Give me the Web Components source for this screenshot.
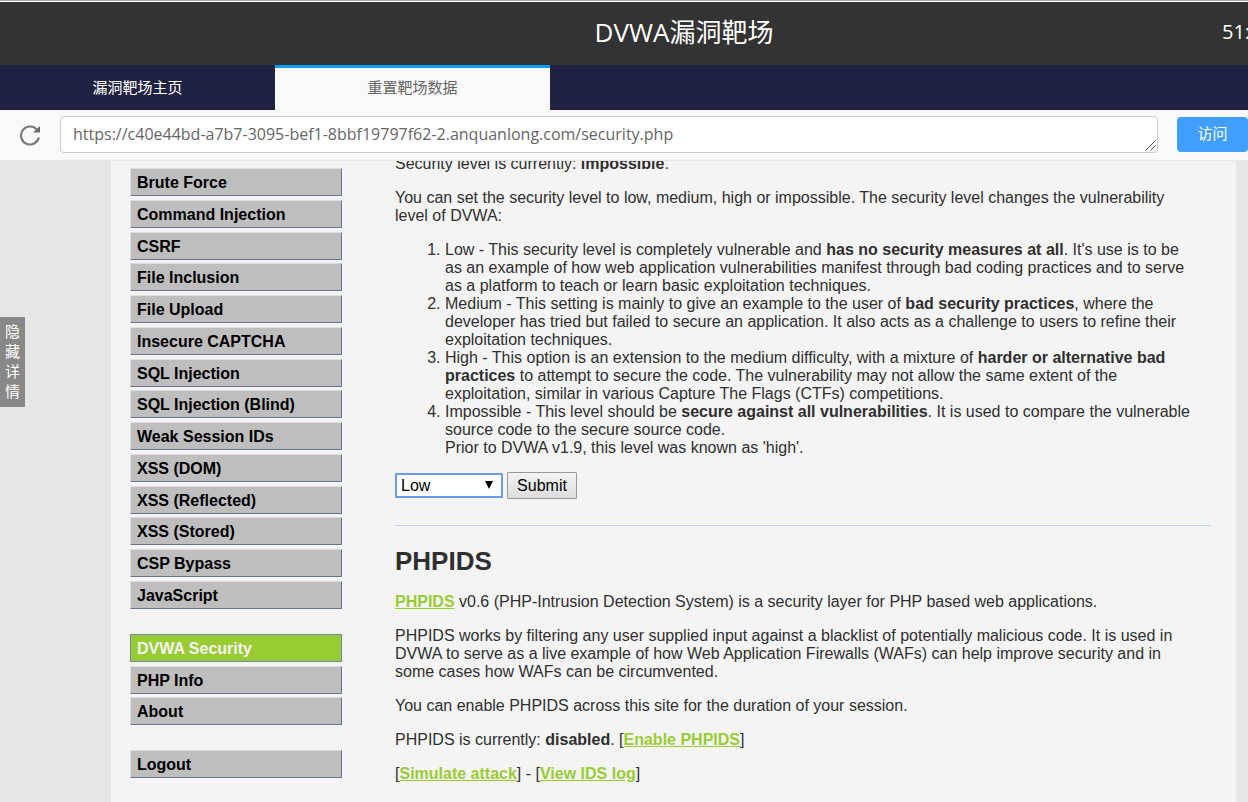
<!DOCTYPE html>
<html lang="zh-CN">
<head>
<meta charset="utf-8">
<meta name="viewport" content="width=device-width, initial-scale=1">
<title>DVWA漏洞靶场</title>
<style>
html, body { margin: 0; height: 100%; overflow: hidden; }
body { font-family: "Open Sans", "Noto Sans CJK SC", sans-serif; background: #e6e6e6; }
</style>
</head>
<body>
<lab-app></lab-app>
<script>
const define = (name, markup, setup) => {
  const template = document.createElement('template');
  template.innerHTML = markup;
  customElements.define(name, class extends HTMLElement {
    constructor() {
      super();
      this.attachShadow({ mode: 'open' }).append(template.content.cloneNode(true));
    }
    connectedCallback() { if (setup) setup(this, this.shadowRoot); }
  });
};

define('lab-header', `
<style>
:host { box-sizing: border-box; display: grid; grid-template-columns: 146px 1fr 26px; align-items: center; height: 64px; flex: none;
  padding-bottom: 4px; background: #333; color: #fff; border-top: 1px solid #fff; }
h1 { grid-column: 2; margin: 0; font-size: 26px; line-height: 36px; font-weight: 400; text-align: center; }
time { font-size: 20px; line-height: 28px; white-space: nowrap; overflow: hidden; }
</style>
<h1><slot></slot></h1><time><slot name="time"></slot></time>`);

define('lab-tabs', `
<style>
:host { display: flex; flex: none; background: #1f2240; height: 45px; }
::slotted(a) { box-sizing: border-box; width: 275px; border-top: 3px solid transparent; color: #fff;
  font-size: 15px; line-height: 38px; text-align: center; text-decoration: none; }
::slotted(a[aria-current]) { background: #f9f9f9; border-top-color: #0a9ff5; color: #666; }
</style>
<slot></slot>`);

define('lab-address', `
<style>
:host { box-sizing: border-box; display: flex; align-items: center; flex: none; height: 51px; padding-bottom: 1px; background: #f9f9f9; border-bottom: 1px solid #e8e8e8; }
button { font: inherit; border: 0; padding: 0; cursor: pointer; }
.reload { display: flex; margin: 0 19px; background: none; }
.field { position: relative; display: flex; flex: 1; min-width: 0; }
textarea { box-sizing: border-box; width: 100%; height: 37px; padding: 6px 12px; border: 1px solid #ccc; border-radius: 4px; resize: none;
  background: #fff; color: #666; font: inherit; font-size: 16px; line-height: 23px; overflow: hidden; }
.grip { position: absolute; right: 2px; bottom: 2px; pointer-events: none; }
.go { width: 71px; height: 35px; margin-left: 19px; border-radius: 4px; background: #409eff; color: #fff; font-size: 15px; line-height: 33px; padding-bottom: 2px; }
</style>
<button class="reload" aria-label="刷新"><svg width="22" height="22" viewBox="0 0 22 22"><path d="M17.500 5.200A9 9 0 1 0 19.800 13.500" fill="none" stroke="#7a7a7a" stroke-width="2.200"/><path d="M21 2v6.500h-7z" fill="#6a6a6a"/></svg></button>
<div class="field"><textarea aria-label="URL" spellcheck="false">https://c40e44bd-a7b7-3095-bef1-8bbf19797f62-2.anquanlong.com/security.php</textarea>
<svg class="grip" width="11" height="11" viewBox="0 0 11 11"><path d="M.5 10.500l10-10M5.500 10.500l5-5" stroke="#555" fill="none"/></svg></div>
<button class="go">访问</button>`);

define('menu-group', `
<style>
:host { display: flex; flex-direction: column; justify-content: space-between; }
</style>
<slot></slot>`);

define('menu-item', `
<style>
:host { display: block; }
a { display: block; padding: 2px 6px 0; border: 1px solid; border-color: #ddd #68738c #68738c #ddd; background: #bebebe; color: #000;
  font-size: 16px; line-height: 24px; font-weight: 700; text-decoration: none; }
:host([current]) a { background: #9c3; border-color: #6f8da8; color: #f4f4f4; }
</style>
<a href="#"><slot></slot></a>`);

define('dvwa-menu', `
<style>
:host { display: flex; flex-direction: column; gap: 25px; }
.attacks { min-height: 441px; }
.system { min-height: 91px; }
</style>
<menu-group class="attacks"></menu-group>
<menu-group class="system"></menu-group>
<menu-group class="session"></menu-group>`, (host, root) => {
  const groups = {
    attacks: ['Brute Force', 'Command Injection', 'CSRF', 'File Inclusion', 'File Upload', 'Insecure CAPTCHA', 'SQL Injection',
      'SQL Injection (Blind)', 'Weak Session IDs', 'XSS (DOM)', 'XSS (Reflected)', 'XSS (Stored)', 'CSP Bypass', 'JavaScript'],
    system: ['DVWA Security', 'PHP Info', 'About'],
    session: ['Logout']
  };
  for (const [name, labels] of Object.entries(groups)) {
    root.querySelector('.' + name).replaceChildren(...labels.map(label => {
      const item = document.createElement('menu-item');
      item.textContent = label;
      item.toggleAttribute('current', label === 'DVWA Security');
      return item;
    }));
  }
});

define('level-form', `
<style>
:host { display: block; }
form { display: flex; align-items: center; gap: 4px; }
label { position: relative; display: flex; }
select { appearance: none; box-sizing: border-box; width: 108px; height: 25px; margin: 0; padding: 0 4px; border: 2px solid #6a9bea;
  border-radius: 1px; background: #fff; color: #000; font: inherit; outline: 0; }
svg { position: absolute; right: 10px; top: 8px; pointer-events: none; }
button { box-sizing: border-box; width: 70px; height: 27px; padding: 0; border: 1px solid #999; border-radius: 1px;
  background: linear-gradient(#f4f4f4, #dcdcdc); color: #000; font: inherit; }
</style>
<form>
<label><select aria-label="Security level"><option>Low</option><option>Medium</option><option>High</option><option>Impossible</option></select>
<svg width="8" height="8" viewBox="0 0 8 8"><path d="M0 0h8L4 8z"/></svg></label>
<button type="button">Submit</button>
</form>`);

define('security-page', `
<style>
:host { display: block; font-size: 16px; line-height: 18px; color: #2f2f2f; }
p, ol { margin: 0 0 16px; padding-right: 16px; }
ol { padding-left: 50px; margin-bottom: 15px; }
h1 { margin: 0 0 17px; font-size: 26px; line-height: 30px; }
hr { margin: 26px 0 20px; border: 0; border-top: 1px solid #c5d7f2; }
a { color: #9c3; font-weight: 700; }
.first { margin-top: -6px; }
</style>
<p class="first">Security level is currently: <strong>impossible</strong>.</p>
<p>You can set the security level to low, medium, high or impossible. The security level changes the vulnerability level of DVWA:</p>
<ol>
<li>Low - This security level is completely vulnerable and <strong>has no security measures at all</strong>. It's use is to be as an example of how web application vulnerabilities manifest through bad coding practices and to serve as a platform to teach or learn basic exploitation techniques.</li>
<li>Medium - This setting is mainly to give an example to the user of <strong>bad security practices</strong>, where the developer has tried but failed to secure an application. It also acts as a challenge to users to refine their exploitation techniques.</li>
<li>High - This option is an extension to the medium difficulty, with a mixture of <strong>harder or alternative bad practices</strong> to attempt to secure the code. The vulnerability may not allow the same extent of the exploitation, similar in various Capture The Flags (CTFs) competitions.</li>
<li>Impossible - This level should be <strong>secure against all vulnerabilities</strong>. It is used to compare the vulnerable source code to the secure source code.<br>Prior to DVWA v1.9, this level was known as 'high'.</li>
</ol>
<level-form></level-form>
<hr>
<h1>PHPIDS</h1>
<p><a href="#">PHPIDS</a> v0.6 (PHP-Intrusion Detection System) is a security layer for PHP based web applications.</p>
<p>PHPIDS works by filtering any user supplied input against a blacklist of potentially malicious code. It is used in DVWA to serve as a live example of how Web Application Firewalls (WAFs) can help improve security and in some cases how WAFs can be circumvented.</p>
<p>You can enable PHPIDS across this site for the duration of your session.</p>
<p>PHPIDS is currently: <strong>disabled</strong>. [<a href="#">Enable PHPIDS</a>]</p>
<p>[<a href="#">Simulate attack</a>] - [<a href="#">View IDS log</a>]</p>`);

define('details-toggle', `
<style>
:host { position: absolute; left: 0; top: 316px; }
button { width: 25px; padding: 4px 5px 6px; border: 0; background: #888; color: #fff; font: inherit; font-size: 15px; line-height: 20px; white-space: normal; word-break: break-all; }
</style>
<button><slot></slot></button>`);

define('lab-app', `
<style>
:host { position: relative; box-sizing: border-box; display: flex; flex-direction: column; height: 100vh; border-top: 1px solid #aaa; }
main { flex: 1; min-height: 0; overflow: hidden; padding: 0 12px 0 111px; background: #e6e6e6; font-family: "Liberation Sans", Arial, sans-serif; display: flex; }
.page { flex: 1; min-width: 0; display: grid; grid-template-columns: 212px 1fr; column-gap: 53px; align-items: start; padding: 0 25px 0 19px; background: #f4f4f4; }
dvwa-menu { padding-top: 7px; }
</style>
<lab-header>DVWA漏洞靶场<span slot="time">51:</span></lab-header>
<lab-tabs><a href="#">漏洞靶场主页</a><a href="#" aria-current="page">重置靶场数据</a></lab-tabs>
<lab-address></lab-address>
<main><div class="page"><dvwa-menu></dvwa-menu><security-page></security-page></div></main>
<details-toggle>隐藏详情</details-toggle>`);
</script>
</body>
</html>
